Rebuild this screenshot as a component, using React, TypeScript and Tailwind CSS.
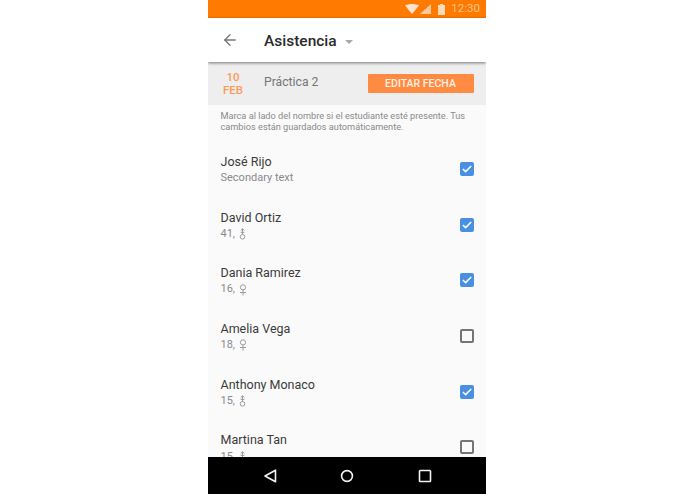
import { ArrowLeft } from 'lucide-react'

const students = [
  { name: 'José Rijo', sub: 'Secondary text', gender: '', checked: true },
  { name: 'David Ortiz', sub: '41,', gender: 'm', checked: true },
  { name: 'Dania Ramirez', sub: '16,', gender: 'f', checked: true },
  { name: 'Amelia Vega', sub: '18,', gender: 'f', checked: false },
  { name: 'Anthony Monaco', sub: '15,', gender: 'm', checked: true },
  { name: 'Martina Tan', sub: '15,', gender: 'm', checked: false },
]

function GenderIcon({ gender }: { gender: string }) {
  if (gender === 'f') {
    return (
      <svg width="8" height="12" viewBox="0 0 8 12" fill="none" stroke="#9a9a9a" strokeWidth="1" className="ml-[4px]">
        <circle cx="4" cy="3.4" r="2.6" />
        <path d="M4 6V11.5M1 8.5H7" />
      </svg>
    )
  }
  return (
    <svg width="7" height="12" viewBox="0 0 7 12" fill="none" stroke="#9a9a9a" strokeWidth="1" className="ml-[4px]">
      <circle cx="3.5" cy="8.8" r="2.3" />
      <path d="M3.5 6.5V0.8M1.7 2.5L3.5 0.8L5.3 2.5M1.7 4.4H5.3" />
    </svg>
  )
}

function Checkbox({ checked }: { checked: boolean }) {
  if (!checked) {
    return <div className="h-[14px] w-[14px] rounded-[2px] border-2 border-[#757575]" />
  }
  return (
    <div className="flex h-[14px] w-[14px] items-center justify-center rounded-[2px] bg-[#4a90e2]">
      <svg width="10" height="8" viewBox="0 0 10 8" fill="none" stroke="#ffffff" strokeWidth="1.5">
        <path d="M0.8 4L3.6 6.6L9.2 1" />
      </svg>
    </div>
  )
}

function StudentRow({ student }: { student: (typeof students)[number] }) {
  return (
    <div className="flex h-[55.7px] shrink-0 items-center justify-between pl-[12.5px] pr-[12.5px]">
      <div className="flex flex-col pt-[1px]">
        <span className="text-[12.5px] leading-[17px] text-[#3a3a3a]">{student.name}</span>
        <div className="mt-[1px] flex h-[15px] items-center text-[11px] text-[#8a8a8a]">
          <span>{student.sub}</span>
          {student.gender && <GenderIcon gender={student.gender} />}
        </div>
      </div>
      <Checkbox checked={student.checked} />
    </div>
  )
}

export default function App() {
  return (
    <div className="h-[494px] w-[695px] overflow-hidden bg-white font-['Roboto',sans-serif]">
      <div className="ml-[208px] flex h-[494px] w-[278px] flex-col overflow-hidden bg-[#fafafa]">
        {/* status bar */}
        <div className="flex h-[18px] shrink-0 items-center justify-end bg-[#ff7a00] pr-[6px]">
          <svg width="14" height="10" viewBox="0 0 14 10" fill="#ffe3cc">
            <path d="M0 1.5C4 -0.5 10 -0.5 14 1.5L7 10Z" />
          </svg>
          <svg width="11" height="10" viewBox="0 0 11 10" fill="#ffc999" className="ml-[1px]">
            <path d="M11 0V10H0Z" />
          </svg>
          <svg width="7" height="11" viewBox="0 0 7 11" fill="#ffd9b8" className="ml-[7px]">
            <path d="M2 0H5V1H7V11H0V1H2Z" />
          </svg>
          <span className="ml-[6px] text-[11.5px] leading-none text-[#ffc48f]">12:30</span>
        </div>

        {/* app bar */}
        <div className="relative z-10 flex h-[44px] shrink-0 items-center bg-white shadow-[0_1px_3px_rgba(0,0,0,0.5)]">
          <ArrowLeft size={18} strokeWidth={1.7} className="ml-[13px] text-[#757575]" />
          <span className="ml-[25px] mt-[3px] text-[15.5px] font-medium text-[#2b2b2b]">Asistencia</span>
          <div className="ml-[8px] mt-[4px] h-0 w-0 border-x-[4px] border-t-[4px] border-x-transparent border-t-[#a8a8a8]" />
        </div>

        {/* date bar */}
        <div className="flex h-[43px] shrink-0 items-center bg-[#eeeeee] pl-[15px] pr-[12.5px]">
          <div className="flex w-[20px] flex-col items-center text-[11.5px] font-medium leading-[13px] text-[#ff9a57]">
            <span>10</span>
            <span>FEB</span>
          </div>
          <span className="ml-[21px] -mt-[3px] text-[12.2px] text-[#757575]">Práctica 2</span>
          <div className="ml-auto flex h-[19px] w-[106px] items-center justify-center rounded-[1px] bg-[#ff8a42] text-[10.5px] font-medium text-[#fff1e6]">
            EDITAR FECHA
          </div>
        </div>

        {/* hint */}
        <p className="shrink-0 pl-[12.5px] pr-[8px] pt-[5px] text-[9.2px] leading-[11px] text-[#8a8a8a]">
          Marca al lado del nombre si el estudiante esté presente. Tus cambios están guardados automáticamente.
        </p>

        {/* list */}
        <div className="mt-[9px] flex min-h-0 flex-1 flex-col overflow-hidden">
          {students.map((student) => (
            <StudentRow key={student.name} student={student} />
          ))}
        </div>

        {/* nav bar */}
        <div className="flex h-[37px] shrink-0 items-center justify-center gap-[63.5px] bg-black">
          <svg width="14" height="14" viewBox="0 0 14 14" fill="none" stroke="#f2f2f2" strokeWidth="1.6">
            <path d="M12.5 1.2V12.8L2 7Z" strokeLinejoin="round" />
          </svg>
          <svg width="14" height="14" viewBox="0 0 14 14" fill="none" stroke="#f2f2f2" strokeWidth="1.6">
            <circle cx="7" cy="7" r="5.4" />
          </svg>
          <svg width="14" height="14" viewBox="0 0 14 14" fill="none" stroke="#f2f2f2" strokeWidth="1.6">
            <rect x="1.5" y="1.5" width="11" height="11" rx="0.8" />
          </svg>
        </div>
      </div>
    </div>
  )
}
